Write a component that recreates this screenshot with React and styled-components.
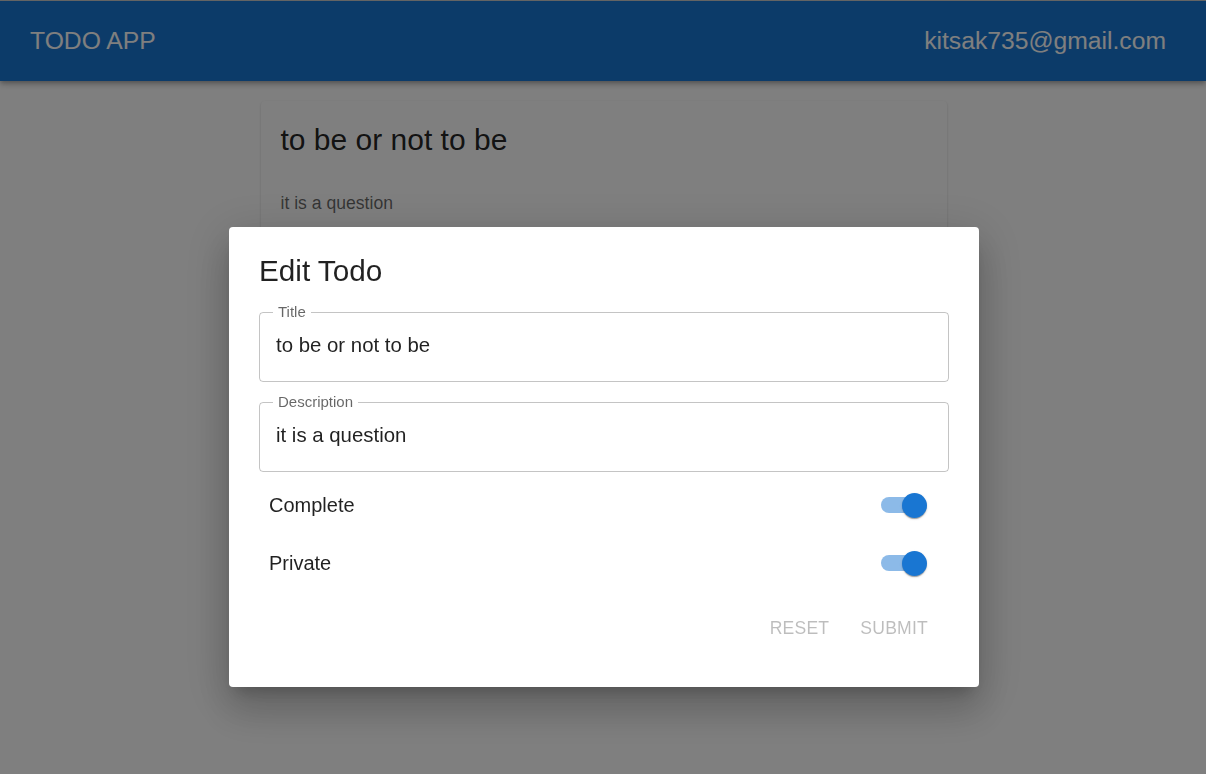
import { useState } from 'react'
import styled, { createGlobalStyle } from 'styled-components'

const GlobalStyle = createGlobalStyle`
  * { box-sizing: border-box; }
  html, body { margin: 0; padding: 0; }
  body {
    font-family: "Liberation Sans", Arial, sans-serif;
    background: #fff;
    color: rgba(0, 0, 0, 0.87);
  }
`

const Page = styled.div`
  min-height: 774px;
  display: flex;
  flex-direction: column;
`

const Header = styled.header`
  height: 81px;
  background: #1976d2;
  border-top: 1px solid #c8c8c8;
  color: #fff;
  display: flex;
  align-items: center;
  justify-content: space-between;
  padding: 0 40px 0 30px;
  font-size: 24.7px;
  box-shadow: 0 2px 4px -1px rgba(0,0,0,0.2), 0 4px 5px 0 rgba(0,0,0,0.14), 0 1px 10px 0 rgba(0,0,0,0.12);
`

const Main = styled.main`
  display: flex;
  justify-content: center;
  padding: 20px 0 0 1px;
`

const Card = styled.div`
  width: 686px;
  min-height: 180px;
  border-radius: 4px;
  padding: 21px 20px;
  background: #fff;
  box-shadow: 0 2px 1px -1px rgba(0,0,0,0.2), 0 1px 1px 0 rgba(0,0,0,0.14), 0 1px 3px 0 rgba(0,0,0,0.12);
`

const CardTitle = styled.div`
  font-size: 30px;
  line-height: 36px;
  color: rgba(0, 0, 0, 0.87);
`

const CardText = styled.div`
  margin-top: 35px;
  font-size: 17.6px;
  color: rgba(0, 0, 0, 0.6);
`

const Backdrop = styled.div`
  position: fixed;
  inset: 0;
  z-index: 10;
  background: rgba(0, 0, 0, 0.5);
  display: flex;
  justify-content: center;
  align-items: flex-start;
  padding: 227px 0 0 2px;
`

const Dialog = styled.form`
  width: 750px;
  height: 460px;
  background: #fff;
  border-radius: 4px;
  padding: 24px 30px;
  display: flex;
  flex-direction: column;
  box-shadow: 0 11px 15px -7px rgba(0,0,0,0.2), 0 24px 38px 3px rgba(0,0,0,0.14), 0 9px 46px 8px rgba(0,0,0,0.12);
`

const DialogTitle = styled.h2`
  margin: 0 0 13px;
  font-size: 29.7px;
  font-weight: 400;
  line-height: 40px;
`

const Field = styled.fieldset`
  margin: 0 0 ${p => p.$gap || 0}px;
  padding: 0 16px;
  height: 78px;
  border: 1px solid rgba(0, 0, 0, 0.23);
  border-radius: 4px;
`

const Legend = styled.legend`
  padding: 0 5px;
  margin-left: -3px;
  font-size: 15px;
  line-height: 16px;
  color: rgba(0, 0, 0, 0.6);
`

const Input = styled.input`
  width: 100%;
  border: none;
  outline: none;
  background: transparent;
  padding: 14px 0 0;
  font-family: inherit;
  font-size: 20.4px;
  color: rgba(0, 0, 0, 0.87);
`

const Toggles = styled.div`
  margin-top: 4px;
`

const ToggleRow = styled.label`
  display: flex;
  align-items: center;
  justify-content: space-between;
  height: 58px;
  padding: 0 24px 0 10px;
  font-size: 20px;
  cursor: pointer;
`

const Track = styled.span`
  position: relative;
  width: 44px;
  height: 16px;
  border-radius: 8px;
  background: ${p => p.$on ? 'rgba(25, 118, 210, 0.5)' : 'rgba(0, 0, 0, 0.38)'};
`

const Thumb = styled.span`
  position: absolute;
  top: -4px;
  left: ${p => p.$on ? '21px' : '-2px'};
  width: 25px;
  height: 25px;
  border-radius: 50%;
  background: ${p => p.$on ? '#1976d2' : '#fafafa'};
  box-shadow: 0 2px 1px -1px rgba(0,0,0,0.2), 0 1px 1px 0 rgba(0,0,0,0.14), 0 1px 3px 0 rgba(0,0,0,0.12);
`

const Actions = styled.div`
  display: flex;
  justify-content: flex-end;
  gap: 15px;
  margin-top: 20px;
  padding-right: 13px;
`

const TextButton = styled.button`
  border: none;
  background: none;
  padding: 6px 8px;
  font-family: inherit;
  font-size: 17.6px;
  letter-spacing: 0.2px;
  text-transform: uppercase;
  color: rgba(0, 0, 0, 0.26);
`

const Toggle = ({ label, on, onChange }) => (
    <ToggleRow onClick={() => onChange(!on)}>
        {label}
        <Track $on={on}>
            <Thumb $on={on}/>
        </Track>
    </ToggleRow>
)

const App = () => {
    const [title, setTitle] = useState('to be or not to be')
    const [description, setDescription] = useState('it is a question')
    const [complete, setComplete] = useState(true)
    const [isPrivate, setIsPrivate] = useState(true)

    return (
        <Page>
            <GlobalStyle/>
            <Header>
                <span>TODO APP</span>
                <span>kitsak735@gmail.com</span>
            </Header>
            <Main>
                <Card>
                    <CardTitle>to be or not to be</CardTitle>
                    <CardText>it is a question</CardText>
                </Card>
            </Main>

            <Backdrop>
                <Dialog onSubmit={e => e.preventDefault()}>
                    <DialogTitle>Edit Todo</DialogTitle>
                    <Field $gap={12}>
                        <Legend>Title</Legend>
                        <Input value={title} onChange={e => setTitle(e.target.value)}/>
                    </Field>
                    <Field>
                        <Legend>Description</Legend>
                        <Input value={description} onChange={e => setDescription(e.target.value)}/>
                    </Field>
                    <Toggles>
                        <Toggle label="Complete" on={complete} onChange={setComplete}/>
                        <Toggle label="Private" on={isPrivate} onChange={setIsPrivate}/>
                    </Toggles>
                    <Actions>
                        <TextButton type="button" disabled>Reset</TextButton>
                        <TextButton type="submit" disabled>Submit</TextButton>
                    </Actions>
                </Dialog>
            </Backdrop>
        </Page>
    )
}

export default App
